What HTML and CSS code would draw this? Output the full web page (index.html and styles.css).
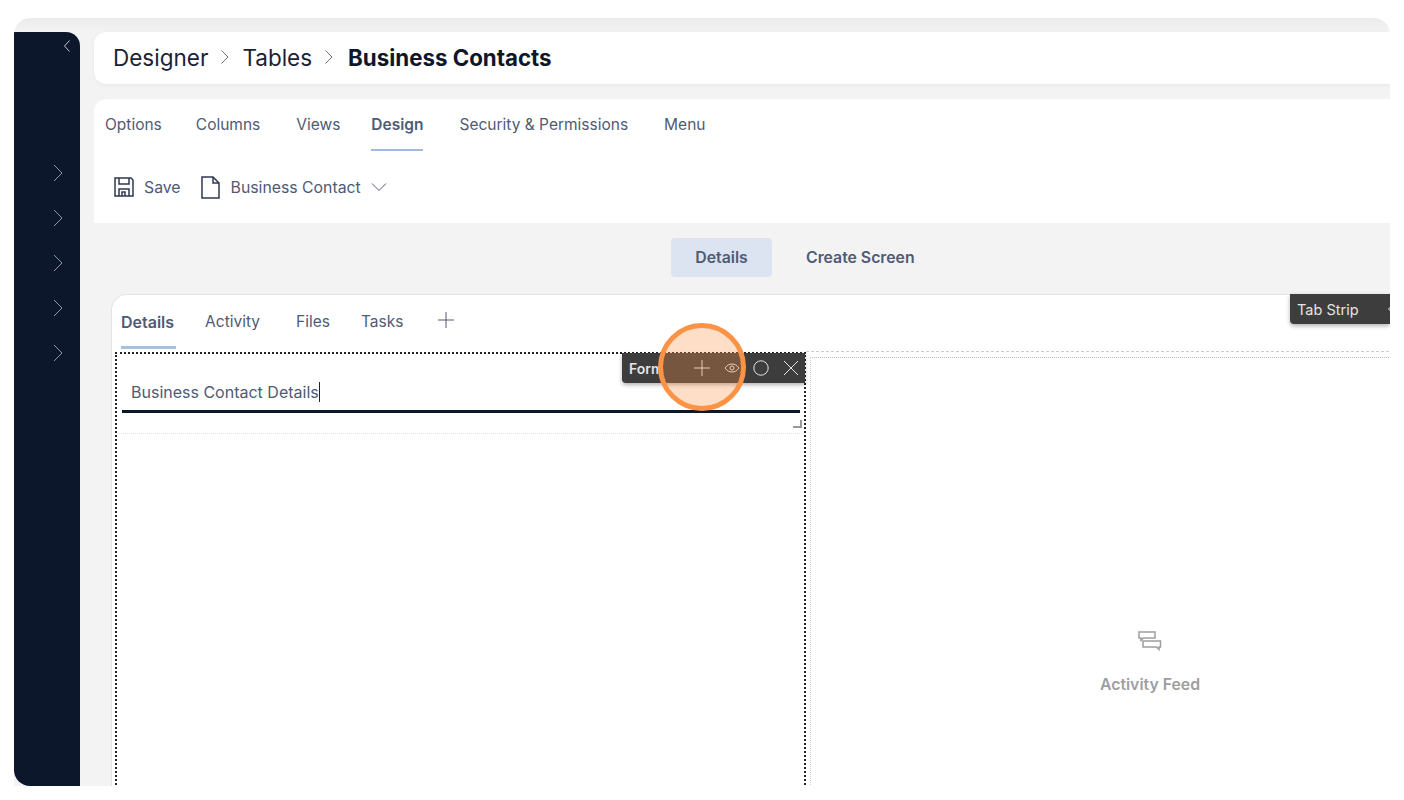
FILE: index.html
```html
<!DOCTYPE html>
<html lang="en">
<head>
  <meta charset="UTF-8" />
  <title>Business Contacts | Designer</title>
  <link rel="stylesheet" href="styles.css">
</head>
<body>
  <div class="window">
    <aside class="sidebar">
      <svg class="collapse" width="8" height="14" viewBox="0 0 8 14"><path d="M6.500 1.500 1.500 7l5 5.500"/></svg>
      <div class="side-items">
        <svg width="12" height="20" viewBox="0 0 12 20"><path d="M2 2l8 8-8 8"/></svg>
        <svg width="12" height="20" viewBox="0 0 12 20"><path d="M2 2l8 8-8 8"/></svg>
        <svg width="12" height="20" viewBox="0 0 12 20"><path d="M2 2l8 8-8 8"/></svg>
        <svg width="12" height="20" viewBox="0 0 12 20"><path d="M2 2l8 8-8 8"/></svg>
        <svg width="12" height="20" viewBox="0 0 12 20"><path d="M2 2l8 8-8 8"/></svg>
      </div>
    </aside>

    <main class="main">
      <div class="breadcrumb">
        <span>Designer</span>
        <svg width="10" height="16" viewBox="0 0 10 16"><path d="M1.500 1.500 8 8l-6.500 6.500"/></svg>
        <span>Tables</span>
        <svg width="10" height="16" viewBox="0 0 10 16"><path d="M1.500 1.500 8 8l-6.500 6.500"/></svg>
        <strong>Business Contacts</strong>
      </div>

      <section class="panel">
        <nav class="tabs">
          <a>Options</a>
          <a>Columns</a>
          <a>Views</a>
          <a class="active">Design</a>
          <a>Security &amp; Permissions</a>
          <a>Menu</a>
        </nav>
        <div class="toolbar">
          <svg class="icon-save" width="20" height="20" viewBox="0 0 20 20">
            <path d="M1 1h16l2 2v16H1z"/>
            <path d="M5 1v6h10V1M5 19v-7h10v7M8 19v-4h3v4"/>
          </svg>
          <span class="save-label">Save</span>
          <svg class="icon-doc" width="19" height="23" viewBox="0 0 19 23">
            <path d="M1 1h11l6 6v15H1z"/>
            <path d="M12 1v6h6"/>
          </svg>
          <span>Business Contact</span>
          <svg class="icon-down" width="16" height="10" viewBox="0 0 16 10"><path d="M1 1.500l7 7 7-7"/></svg>
        </div>
      </section>

      <div class="switcher">
        <button class="switch on">Details</button>
        <button class="switch">Create Screen</button>
      </div>

      <section class="canvas">
        <nav class="sub-tabs">
          <a class="active">Details</a>
          <a>Activity</a>
          <a>Files</a>
          <a>Tasks</a>
          <svg width="16" height="16" viewBox="0 0 16 16"><path d="M8 0v16M0 8h16"/></svg>
        </nav>
        <div class="tab-label">
          <span>Tab Strip</span>
          <svg width="8" height="10" viewBox="0 0 8 10"><path d="M5 1.500 1.500 5 5 8.500"/></svg>
        </div>

        <div class="columns">
          <div class="form-col">
            <div class="form-label">
              <span>Form</span>
              <svg class="tool-plus" width="16" height="16" viewBox="0 0 16 16"><path d="M8 0v16M0 8h16"/></svg>
              <svg class="tool-eye" width="16" height="10" viewBox="0 0 16 10">
                <path d="M1 5c2-2.700 4.300-4 7-4s5 1.300 7 4c-2 2.700-4.300 4-7 4S3 7.700 1 5z"/>
                <circle cx="8" cy="5" r="2"/>
              </svg>
              <svg class="tool-circle" width="16" height="16" viewBox="0 0 16 16"><circle cx="8" cy="8" r="7.200"/></svg>
              <svg class="tool-close" width="16" height="16" viewBox="0 0 16 16"><path d="M1 1l14 14M15 1 1 15"/></svg>
            </div>
            <div class="form-title"><span class="caret">Business Contact Details</span></div>
            <div class="form-resize"></div>
          </div>
          <div class="feed-col">
            <div class="feed-box">
              <svg class="feed-icon" width="24" height="20" viewBox="0 0 24 20">
                <path d="M1 1h16v6H5.500L3 9.500V7H1z"/>
                <path d="M5 10h17.500v6H21v2.500L18.500 16H5z"/>
              </svg>
              <div class="feed-text">Activity Feed</div>
            </div>
          </div>
        </div>
      </section>
    </main>

    <div class="spot"></div>
  </div>
</body>
</html>
```

FILE: styles.css
```css
body { margin: 0; background-color: white; font-family: Inter, 'Open Sans', sans-serif; color: #4f5a75; }
svg { fill: none; stroke: currentColor; stroke-width: 1; flex: none; }

.window { position: relative; display: flex; width: 1376px; height: 768px; margin: 18px 14px 0; padding-top: 14px; box-sizing: border-box; background: linear-gradient(#ebebeb, #f3f3f3 14px); border-radius: 16px 16px 0 0; overflow: hidden; }

.sidebar { position: relative; width: 66px; flex: none; background-color: #0d172b; border-radius: 0 14px 0 16px; color: #8d95a6; }
.collapse { position: absolute; top: 7px; left: 49px; color: #c4c8d0; }
.side-items { display: flex; flex-direction: column; gap: 25px; margin-top: 131px; padding-left: 38px; }
.side-items svg { display: block; }

.main { flex: 1; min-width: 0; margin-left: 14px; }

.breadcrumb { display: flex; align-items: center; height: 52px; padding: 0 0 2px 19px; box-sizing: border-box; background-color: white; border-radius: 12px 0 0 12px; box-shadow: 0 1px 4px rgba(0,0,0,0.05); font-size: 22.500px; color: #1a2336; }
.breadcrumb svg { margin: 0 12px 0 12px; color: #6b7280; }
.breadcrumb strong { margin-left: 2px; font-weight: 700; font-size: 22.300px; color: #0d172b; }

.panel { margin-top: 15px; height: 124px; background-color: white; border-radius: 12px 0 0 0; }
.tabs { display: flex; height: 52px; padding-left: 11px; font-size: 15.500px; }
.tabs a { display: block; margin-right: 36px; padding-top: 16px; height: 34px; }
.tabs a:nth-child(1) { margin-right: 34px; }
.tabs a:nth-child(3) { margin-right: 31px; }
.tabs .active { font-weight: 600; border-bottom: 2px solid #a3b9dd; }

.toolbar { display: flex; align-items: center; height: 72px; padding-left: 20px; font-size: 15.800px; }
.icon-save { color: #2e3850; stroke-width: 1.500; }
.save-label { margin: 0 20px 0 10px; }
.icon-doc { margin-right: 11px; color: #2e3850; stroke-width: 1.500; }
.icon-down { margin-left: 10px; }

.switcher { display: flex; gap: 14px; margin-top: 15px; padding-left: 577px; }
.switch { height: 39px; padding: 0 20px; border: none; border-radius: 4px; background: none; font: 600 15.800px Inter, sans-serif; color: #4f5a75; }
.switch.on { width: 101px; padding: 0; background-color: #dce4f2; }

.canvas { position: relative; height: 600px; margin: 17px 0 0 17px; background-color: white; border: 1px solid #e4e4e4; border-right: none; border-radius: 16px 0 0 0; }
.sub-tabs { display: flex; align-items: flex-start; height: 57px; padding-left: 9px; font-size: 15.500px; }
.sub-tabs a { display: block; margin-right: 31px; padding-top: 17px; height: 33px; }
.sub-tabs a:nth-child(2) { margin-right: 36px; }
.sub-tabs .active { font-size: 16px; font-weight: 600; margin-right: 29px; padding-right: 2px; height: 34px; border-bottom: 3px solid #a9bfe0; }
.sub-tabs svg { margin: 17px 0 0 4px; }

.tab-label { position: absolute; top: -1px; right: 0; display: flex; align-items: center; gap: 28px; width: 100px; height: 30px; padding-left: 7px; box-sizing: border-box; overflow: hidden; white-space: nowrap; background-color: #3d3d3d; border-radius: 0 0 0 4px; box-shadow: 0 2px 4px rgba(0,0,0,0.3); font-size: 14.500px; color: #e4e4e4; }
.tab-label span { flex: none; }

.columns { display: flex; height: 500px; align-items: stretch; }
.form-col { position: relative; flex: none; width: 691px; margin-left: 3px; box-sizing: border-box; border: 2px dotted #222; border-bottom: none; }
.form-label { position: absolute; top: -1px; right: -1px; display: flex; align-items: center; width: 183px; height: 30px; box-sizing: border-box; padding-left: 7px; background-color: #3d3d3d; border-radius: 0 0 0 4px; box-shadow: 0 2px 4px rgba(0,0,0,0.3); font-size: 14px; font-weight: 600; color: #e4e4e4; }
.form-label span { width: 65px; }
.tool-eye { margin-left: 14px; }
.tool-circle { margin-left: 13px; }
.tool-close { margin-left: 14px; }

.form-title { height: 59px; margin: 0 4px 0 5px; padding: 28px 0 0 9px; box-sizing: border-box; border-bottom: 3px solid #0d172b; font-size: 16px; }
.caret { border-right: 1px solid #1a2336; }
.form-resize { position: relative; height: 20px; border-bottom: 1px dotted #e2e2e2; }
.form-resize::after { content: ''; position: absolute; right: 2px; bottom: 5px; width: 9px; height: 8px; box-sizing: border-box; border-right: 2px solid #999; border-bottom: 2px solid #999; }

.feed-col { flex: none; width: 683px; margin-top: -1px; border-top: 1px dashed #ccc; color: #9e9e9e; }
.feed-box { display: flex; flex-direction: column; align-items: center; height: 100%; margin: 5px 0 0 4px; padding-top: 273px; box-sizing: border-box; border-top: 1px dotted #bbb; border-left: 1px dotted #ccc; }
.feed-icon { stroke-width: 1.500; }
.feed-text { margin-top: 24px; font-size: 15.800px; font-weight: 600; }

.spot { position: absolute; top: 305px; left: 644px; width: 88px; height: 88px; box-sizing: border-box; border: 5px solid #fb9347; border-radius: 50%; background-color: rgba(251,147,71,0.3); }
```
